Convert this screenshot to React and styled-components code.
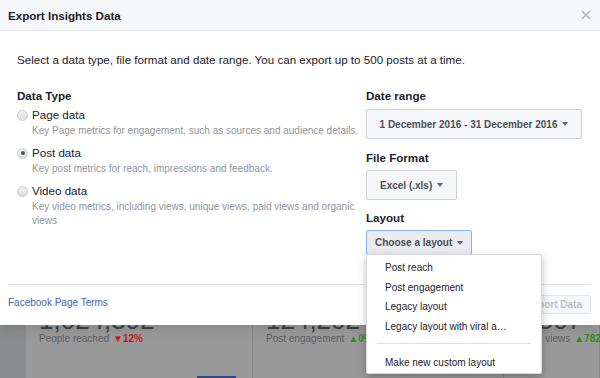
import React from 'react';
import styled, { createGlobalStyle } from 'styled-components';

const GlobalStyle = createGlobalStyle`
  html, body {
    margin: 0;
    padding: 0;
  }
  body {
    font-family: "Liberation Sans", Arial, Helvetica, sans-serif;
    background: #999;
  }
  * {
    box-sizing: border-box;
  }
`;

const Screen = styled.div`
  position: relative;
  width: 600px;
  height: 378px;
  overflow: hidden;
`;

/* dimmed insights page behind the dialog */
const Backdrop = styled.div`
  position: absolute;
  inset: 0;
  display: flex;
  background: #999;
`;

const SideStrip = styled.div`
  width: 26px;
  flex-shrink: 0;
  background: #8b8c8e;
`;

const StatCard = styled.div`
  width: ${(p) => (p.$w ? `${p.$w}px` : 'auto')};
  flex: ${(p) => (p.$w ? '0 0 auto' : '1 1 0')};
  min-width: 0;
  padding: 309px 13px 0;
  border-right: 1px solid #878787;
`;

const StatNumber = styled.div`
  font-size: 26px;
  line-height: 23px;
  color: #3e3f41;
`;

const StatLabel = styled.div`
  font-size: 10px;
  line-height: 14px;
  color: #5b5d61;
  white-space: nowrap;
`;

const Delta = styled.span`
  font-weight: bold;
  color: ${(p) => (p.$up ? '#2f8a1f' : '#c41a1a')};
  margin-left: 4px;
`;

const Chart = styled.div`
  display: flex;
  justify-content: flex-end;
  margin-top: 30px;
  padding-right: 3px;
`;

const Bar = styled.div`
  width: 39px;
  height: 40px;
  background: #2d4a86;
`;

const Dialog = styled.div`
  position: absolute;
  top: 0;
  left: 0;
  right: 0;
  background: #fff;
  box-shadow: 0 2px 12px rgba(0, 0, 0, 0.15);
  color: #1d2129;
`;

const Header = styled.div`
  height: 31px;
  display: flex;
  align-items: center;
  justify-content: space-between;
  padding: 0 8px;
  background: #f6f7f9;
  border-bottom: 1px solid #e5e5e5;
`;

const Title = styled.h2`
  margin: 0;
  font-size: 11.6px;
  font-weight: bold;
  color: #1d2129;
`;

const CloseButton = styled.button`
  border: 0;
  background: none;
  padding: 0;
  width: 12px;
  height: 12px;
  display: flex;
  align-items: center;
  justify-content: center;
  cursor: pointer;
`;

const Body = styled.div`
  height: 253px;
  padding: 21px 18px 0 17px;
`;

const Intro = styled.p`
  margin: 0;
  font-size: 11.6px;
  line-height: 16px;
`;

const Columns = styled.div`
  display: grid;
  grid-template-columns: 1fr 216px;
  column-gap: 4px;
  margin-top: 20px;
`;

const Heading = styled.h3`
  margin: 0 0 ${(p) => p.$gap || 2}px;
  margin-top: ${(p) => p.$top || 0}px;
  font-size: 11.6px;
  line-height: 16px;
  font-weight: bold;
  color: #1d2129;
`;

const Option = styled.label`
  display: block;
  margin-bottom: 7px;
  cursor: pointer;
`;

const OptionRow = styled.span`
  display: flex;
  align-items: center;
  gap: 4px;
  font-size: 11.6px;
  line-height: 16px;
`;

const Radio = styled.span`
  width: 11px;
  height: 11px;
  border-radius: 50%;
  border: 1px solid #c9ccd1;
  background: linear-gradient(#f0f1f3, #dddfe2);
  display: flex;
  align-items: center;
  justify-content: center;

  &::after {
    content: '';
    width: 4px;
    height: 4px;
    border-radius: 50%;
    background: ${(p) => (p.$checked ? '#4b4f56' : 'transparent')};
  }
`;

const OptionHint = styled.span`
  display: block;
  padding: 1px 0 0 15px;
  font-size: 10px;
  line-height: 14px;
  color: #90949c;
`;

const SelectButton = styled.button`
  height: ${(p) => (p.$active ? 25 : 30)}px;
  width: ${(p) => (p.$full ? '100%' : 'auto')};
  display: inline-flex;
  align-items: center;
  justify-content: center;
  gap: 4px;
  padding: 0 ${(p) => p.$pad || 12}px;
  font-family: inherit;
  font-size: 10px;
  font-weight: bold;
  white-space: nowrap;
  color: #4b4f56;
  background: ${(p) => (p.$active ? '#e9ebee' : '#f6f7f9')};
  border: 1px solid ${(p) => (p.$active ? '#8ab0f2' : '#ced0d4')};
  border-radius: 2px;
  cursor: pointer;
`;

const Caret = styled.span`
  width: 0;
  height: 0;
  border-left: 3.5px solid transparent;
  border-right: 3.5px solid transparent;
  border-top: 4px solid #606770;
  margin-left: 1px;
`;

const LayoutPicker = styled.div`
  position: relative;
`;

const Menu = styled.ul`
  position: absolute;
  top: 24px;
  left: 0;
  z-index: 5;
  width: 176px;
  margin: 0;
  padding: 3px 0 0;
  list-style: none;
  background: #fff;
  border: 1px solid rgba(0, 0, 0, 0.15);
  border-radius: 2px;
  box-shadow: 0 3px 8px rgba(0, 0, 0, 0.25);
`;

const MenuItem = styled.li`
  padding: 0 33px 0 18px;
  font-size: 10px;
  line-height: 19.5px;
  color: #1d2129;
  white-space: nowrap;
  overflow: hidden;
  text-overflow: ellipsis;
`;

const MenuSeparator = styled.li`
  height: 1px;
  margin: 7px 10px 9px;
  background: #dddfe2;
`;

const Footer = styled.div`
  height: 41px;
  margin: 0 9px 0 8px;
  padding-top: 10px;
  display: flex;
  align-items: flex-start;
  justify-content: space-between;
  border-top: 1px solid #e5e5e5;
`;

const TermsLink = styled.a`
  font-size: 10px;
  line-height: 14px;
  margin-top: 1px;
  color: #4267b2;
  text-decoration: none;
`;

const ExportButton = styled.button`
  height: 19px;
  padding: 0 8px;
  font-family: inherit;
  font-size: 10px;
  font-weight: bold;
  color: #bec3c9;
  background: #f6f7f9;
  border: 1px solid #e4e6e9;
  border-radius: 2px;
`;

const dataTypes = [
  {
    label: 'Page data',
    hint: 'Key Page metrics for engagement, such as sources and audience details.',
  },
  {
    label: 'Post data',
    hint: 'Key post metrics for reach, impressions and feedback.',
    checked: true,
  },
  {
    label: 'Video data',
    hint: 'Key video metrics, including views, unique views, paid views and organic views',
  },
];

const layouts = [
  'Post reach',
  'Post engagement',
  'Legacy layout',
  'Legacy layout with viral amplification',
];

function App() {
  return (
    <Screen>
      <GlobalStyle />
      <Backdrop>
        <SideStrip />
        <StatCard $w={227}>
          <StatNumber>1,024,392</StatNumber>
          <StatLabel>
            People reached<Delta>▼12%</Delta>
          </StatLabel>
          <Chart>
            <Bar />
          </Chart>
        </StatCard>
        <StatCard $w={251}>
          <StatNumber>124,202</StatNumber>
          <StatLabel>
            Post engagement<Delta $up>▲0%</Delta>
          </StatLabel>
        </StatCard>
        <StatCard>
          <StatNumber>8,507</StatNumber>
          <StatLabel>
            Video views<Delta $up>▲782%</Delta>
          </StatLabel>
        </StatCard>
      </Backdrop>

      <Dialog>
        <Header>
          <Title>Export Insights Data</Title>
          <CloseButton aria-label="Close">
            <svg width="10" height="10" viewBox="0 0 10 10">
              <path d="M1 1L9 9M9 1L1 9" stroke="#b0b4bb" strokeWidth="1.5" />
            </svg>
          </CloseButton>
        </Header>
        <Body>
          <Intro>
            Select a data type, file format and date range. You can export up
            to 500 posts at a time.
          </Intro>
          <Columns>
            <div>
              <Heading $gap={3}>Data Type</Heading>
              {dataTypes.map((t) => (
                <Option key={t.label}>
                  <OptionRow>
                    <Radio $checked={t.checked} />
                    {t.label}
                  </OptionRow>
                  <OptionHint>{t.hint}</OptionHint>
                </Option>
              ))}
            </div>
            <div>
              <Heading $gap={5}>Date range</Heading>
              <SelectButton $full>
                1 December 2016 - 31 December 2016 <Caret />
              </SelectButton>
              <Heading $top={11} $gap={4}>
                File Format
              </Heading>
              <SelectButton $pad={13}>
                Excel (.xls) <Caret />
              </SelectButton>
              <Heading $top={10} $gap={4}>
                Layout
              </Heading>
              <LayoutPicker>
                <SelectButton $active $pad={8}>
                  Choose a layout <Caret />
                </SelectButton>
                <Menu>
                  {layouts.map((l) => (
                    <MenuItem key={l}>{l}</MenuItem>
                  ))}
                  <MenuSeparator />
                  <MenuItem>Make new custom layout</MenuItem>
                </Menu>
              </LayoutPicker>
            </div>
          </Columns>
        </Body>
        <Footer>
          <TermsLink href="#">Facebook Page Terms</TermsLink>
          <ExportButton disabled>Export Data</ExportButton>
        </Footer>
      </Dialog>
    </Screen>
  );
}

export default App;
